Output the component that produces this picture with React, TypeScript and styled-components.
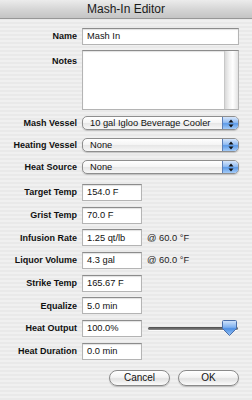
import React from "react";
import styled, { createGlobalStyle } from "styled-components";

const GlobalStyle = createGlobalStyle`
  html, body {
    margin: 0;
    padding: 0;
  }
  body {
    font-family: "Liberation Sans", Arial, sans-serif;
    color: #111;
  }
`;

const Window = styled.div`
  width: 252px;
  height: 400px;
  overflow: hidden;
  display: flex;
  flex-direction: column;
  background: repeating-linear-gradient(
    to bottom,
    #f0f0f0 0px,
    #f0f0f0 2px,
    #e9e9e9 2px,
    #e9e9e9 4px
  );
`;

const TitleBar = styled.div`
  height: 18px;
  flex-shrink: 0;
  border-bottom: 1px solid #979797;
  background: linear-gradient(#ececec, #d6d6d6 50%, #c4c4c4);
  display: flex;
  align-items: center;
  justify-content: center;
  font-size: 12px;
  color: #1a1a1a;
`;

const Form = styled.div`
  display: flex;
  flex-direction: column;
  padding: 6px 13px 0 0;
`;

const Row = styled.div<{ $h: number; $mt?: number; $top?: boolean }>`
  display: flex;
  align-items: ${({ $top }) => ($top ? "flex-start" : "center")};
  height: ${({ $h }) => $h}px;
  margin-top: ${({ $mt }) => $mt ?? 0}px;
`;

const Label = styled.div<{ $pt?: number }>`
  width: 77px;
  flex-shrink: 0;
  margin-right: 5px;
  padding-top: ${({ $pt }) => $pt ?? 0}px;
  text-align: right;
  font-size: 9px;
  font-weight: bold;
  white-space: nowrap;
  color: #111;
`;

const Field = styled.div<{ $w?: number }>`
  box-sizing: border-box;
  width: ${({ $w }) => ($w ? `${$w}px` : "auto")};
  flex: ${({ $w }) => ($w ? "0 0 auto" : "1")};
  height: 17px;
  padding: 0 4px;
  display: flex;
  align-items: center;
  background: #fff;
  border: 1px solid #b4b4b4;
  border-top-color: #8c8c8c;
  box-shadow: inset 0 1px 1px rgba(0, 0, 0, 0.12);
  font-size: 9.3px;
  color: #111;
  white-space: nowrap;
`;

const NotesBox = styled.div`
  flex: 1;
  height: 60px;
  box-sizing: border-box;
  display: flex;
  justify-content: flex-end;
  background: #fff;
  border: 1px solid #b4b4b4;
  border-top-color: #8c8c8c;
  box-shadow: inset 0 1px 1px rgba(0, 0, 0, 0.12);
`;

const ScrollTrack = styled.div`
  width: 13px;
  height: 100%;
  border-left: 1px solid #c8c8c8;
  background: linear-gradient(
    to right,
    #d9d9d9,
    #f4f4f4 35%,
    #ffffff 60%,
    #e2e2e2
  );
`;

const Popup = styled.div`
  flex: 1;
  height: 14px;
  box-sizing: border-box;
  display: flex;
  align-items: stretch;
  border: 1px solid #8e8e8e;
  border-radius: 5px;
  background: linear-gradient(#ffffff, #f4f4f4 50%, #e6e6e6 51%, #f7f7f7);
  box-shadow: 0 1px 1px rgba(0, 0, 0, 0.18);
  overflow: hidden;
`;

const PopupText = styled.div`
  flex: 1;
  padding-left: 7px;
  display: flex;
  align-items: center;
  font-size: 9.3px;
  color: #111;
  white-space: nowrap;
`;

const PopupCap = styled.div`
  width: 15px;
  display: flex;
  align-items: center;
  justify-content: center;
  border-left: 1px solid #5b7fb8;
  background: linear-gradient(#d6e6fb, #93bdf3 45%, #5d9be8 55%, #a4cbf7);
`;

const Unit = styled.div`
  margin-left: 5px;
  font-size: 9.3px;
  color: #222;
  white-space: nowrap;
`;

const Slider = styled.div`
  position: relative;
  width: 90px;
  height: 17px;
  margin-left: 6px;
  display: flex;
  align-items: center;
`;

const Track = styled.div`
  width: 100%;
  height: 3px;
  border-radius: 2px;
  background: linear-gradient(#4a4a4a, #8c8c8c);
  box-shadow: 0 1px 0 rgba(255, 255, 255, 0.8);
`;

const Thumb = styled.svg`
  position: absolute;
  right: 0;
  top: -1px;
`;

const ButtonBar = styled.div`
  display: flex;
  justify-content: flex-end;
  gap: 8px;
  margin-top: 7px;
`;

const Button = styled.button`
  width: 61px;
  height: 16px;
  padding: 0;
  border: 1px solid #8a8a8a;
  border-radius: 8px;
  background: linear-gradient(#ffffff, #f3f3f3 45%, #e2e2e2 55%, #fbfbfb);
  box-shadow: 0 1px 1px rgba(0, 0, 0, 0.2);
  font-family: "Liberation Sans", Arial, sans-serif;
  font-size: 10px;
  color: #111;
`;

const Arrows = () => (
  <svg width="6" height="9" viewBox="0 0 6 9">
    <path d="M3 0.5 L5.5 3.5 H0.5 Z" fill="#111" />
    <path d="M3 8.5 L5.5 5.5 H0.5 Z" fill="#111" />
  </svg>
);

const SliderThumb = () => (
  <Thumb width="17" height="18" viewBox="0 0 17 18">
    <defs>
      <linearGradient id="thumbFill" x1="0" y1="0" x2="0" y2="1">
        <stop offset="0" stopColor="#d3e5fb" />
        <stop offset="0.45" stopColor="#7fb1ef" />
        <stop offset="0.55" stopColor="#4e8fe3" />
        <stop offset="1" stopColor="#9cc6f6" />
      </linearGradient>
    </defs>
    <path
      d="M2.5 1.5 H14.5 Q15.5 1.5 15.5 2.5 V9.5 L8.5 16.5 L1.5 9.5 V2.5 Q1.5 1.5 2.5 1.5 Z"
      fill="url(#thumbFill)"
      stroke="#4a6ea8"
      strokeWidth="1"
    />
  </Thumb>
);

interface PopupProps {
  value: string;
}

const PopupButton: React.FC<PopupProps> = ({ value }) => (
  <Popup>
    <PopupText>{value}</PopupText>
    <PopupCap>
      <Arrows />
    </PopupCap>
  </Popup>
);

const TEXT_ROW = 22.7;

const App: React.FC = () => {
  return (
    <>
      <GlobalStyle />
      <Window>
        <TitleBar>Mash-In Editor</TitleBar>
        <Form>
          <Row $h={22}>
            <Label>Name</Label>
            <Field>Mash In</Field>
          </Row>
          <Row $h={60} $mt={3} $top>
            <Label $pt={6}>Notes</Label>
            <NotesBox>
              <ScrollTrack />
            </NotesBox>
          </Row>
          <Row $h={22} $mt={2}>
            <Label>Mash Vessel</Label>
            <PopupButton value="10 gal Igloo Beverage Cooler" />
          </Row>
          <Row $h={22}>
            <Label>Heating Vessel</Label>
            <PopupButton value="None" />
          </Row>
          <Row $h={22}>
            <Label>Heat Source</Label>
            <PopupButton value="None" />
          </Row>
          <Row $h={TEXT_ROW} $mt={3}>
            <Label>Target Temp</Label>
            <Field $w={60}>154.0 F</Field>
          </Row>
          <Row $h={TEXT_ROW}>
            <Label>Grist Temp</Label>
            <Field $w={60}>70.0 F</Field>
          </Row>
          <Row $h={TEXT_ROW}>
            <Label>Infusion Rate</Label>
            <Field $w={60}>1.25 qt/lb</Field>
            <Unit>@ 60.0 °F</Unit>
          </Row>
          <Row $h={TEXT_ROW}>
            <Label>Liquor Volume</Label>
            <Field $w={60}>4.3 gal</Field>
            <Unit>@ 60.0 °F</Unit>
          </Row>
          <Row $h={TEXT_ROW}>
            <Label>Strike Temp</Label>
            <Field $w={60}>165.67 F</Field>
          </Row>
          <Row $h={TEXT_ROW}>
            <Label>Equalize</Label>
            <Field $w={60}>5.0 min</Field>
          </Row>
          <Row $h={TEXT_ROW}>
            <Label>Heat Output</Label>
            <Field $w={60}>100.0%</Field>
            <Slider>
              <Track />
              <SliderThumb />
            </Slider>
          </Row>
          <Row $h={TEXT_ROW}>
            <Label>Heat Duration</Label>
            <Field $w={60}>0.0 min</Field>
          </Row>
          <ButtonBar>
            <Button>Cancel</Button>
            <Button>OK</Button>
          </ButtonBar>
        </Form>
      </Window>
    </>
  );
};

export default App;
